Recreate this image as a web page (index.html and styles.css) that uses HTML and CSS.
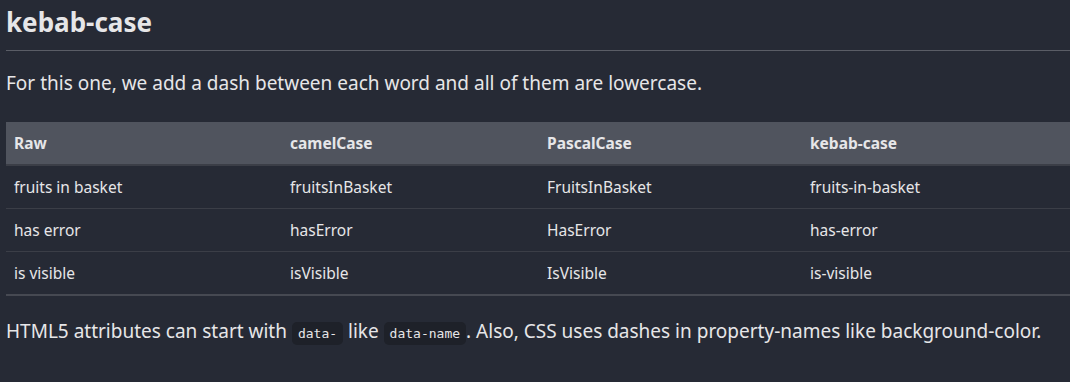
FILE: index.html
```html
<!DOCTYPE html>
<html lang="en">
<head>
  <meta charset="UTF-8">
  <title>kebab-case</title>
  <link rel="stylesheet" href="styles.css">
</head>
<body>
  <h2>kebab-case</h2>
  <p>For this one, we add a dash between each word and all of them are lowercase.</p>

  <table>
    <thead>
      <tr>
        <th class="col-raw">Raw</th>
        <th class="col-camel">camelCase</th>
        <th class="col-pascal">PascalCase</th>
        <th>kebab-case</th>
      </tr>
    </thead>
    <tbody>
      <tr>
        <td>fruits in basket</td>
        <td>fruitsInBasket</td>
        <td>FruitsInBasket</td>
        <td>fruits-in-basket</td>
      </tr>
      <tr>
        <td>has error</td>
        <td>hasError</td>
        <td>HasError</td>
        <td>has-error</td>
      </tr>
      <tr>
        <td>is visible</td>
        <td>isVisible</td>
        <td>IsVisible</td>
        <td>is-visible</td>
      </tr>
    </tbody>
  </table>

  <p class="note">HTML5 attributes can start with <code>data-</code> like <code>data-name</code>. Also, CSS uses dashes in property-names like background-color.</p>
</body>
</html>
```

FILE: styles.css
```css
body {
  font-family: "Noto Sans", "Open Sans", sans-serif;
  background-color: #262a35;
  color: #e6e6e8;
  margin: 0;
  padding: 0 0 0 6px;
}
h2 {
  font-size: 26px;
  font-weight: bold;
  margin: 0;
  padding: 3px 0 9px;
  line-height: 38px;
  border-bottom: 1px solid #5a5d66;
}
p {
  font-size: 19px;
  margin: 18px 0 25px;
  line-height: 28px;
}
table {
  width: 1080px;
  border-collapse: collapse;
  font-size: 15.5px;
  border-bottom: 2px solid #464952;
}
th {
  text-align: left;
  font-weight: bold;
  background-color: #50545e;
  height: 42px;
  padding: 0 8px;
  border-bottom: 2px solid #3b3e47;
}
td {
  height: 42px;
  padding: 0 8px;
  border-bottom: 1px solid #3b3e47;
}
.col-raw {
  width: 260px;
}
.col-camel {
  width: 241px;
}
.col-pascal {
  width: 247px;
}
.note {
  margin-top: 21px;
}
code {
  font-family: "DejaVu Sans Mono", monospace;
  font-size: 13px;
  background-color: #1e2129;
  border-radius: 5px;
  padding: 4px 6px;
}
```
